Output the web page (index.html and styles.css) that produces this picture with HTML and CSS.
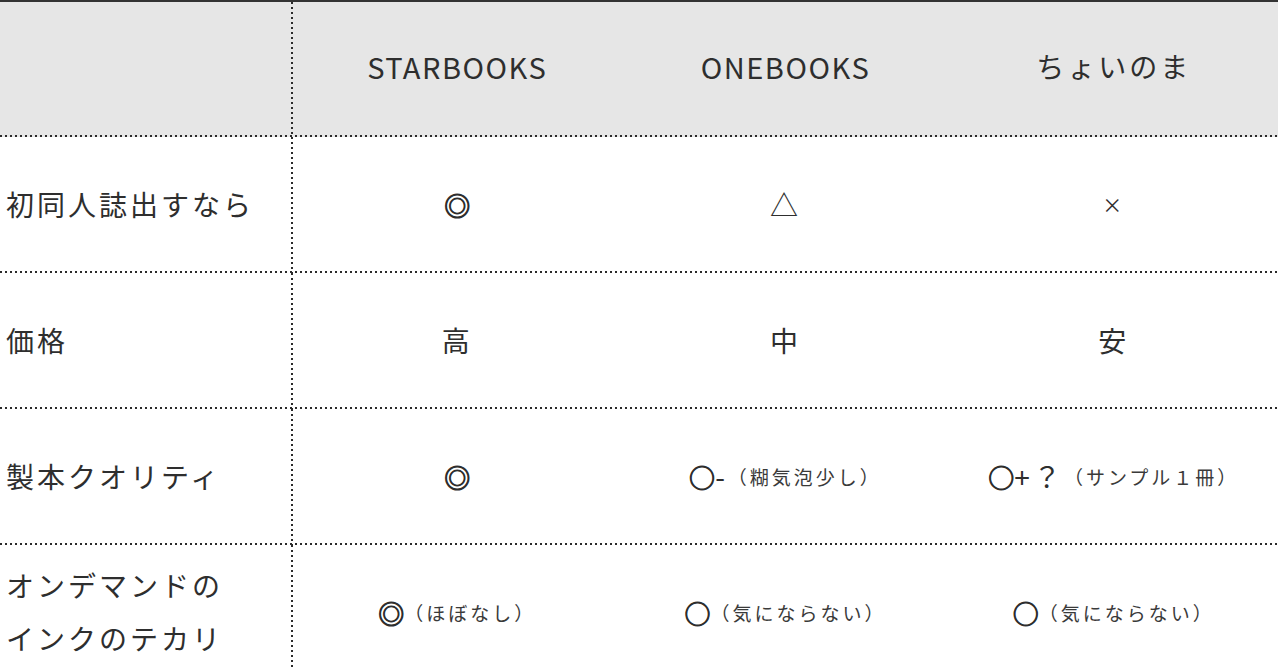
FILE: index.html
```html
<!DOCTYPE html>
<html lang="ja">
<head>
<meta charset="utf-8">
<title>比較表</title>
<link rel="stylesheet" href="styles.css">
</head>
<body>
<div class="table">
  <div class="row head">
    <div class="cell label"></div>
    <div class="cell latin">STARBOOKS</div>
    <div class="cell latin">ONEBOOKS</div>
    <div class="cell">ちょいのま</div>
  </div>
  <div class="row">
    <div class="cell label">初同人誌出すなら</div>
    <div class="cell"><span class="mark">◎</span></div>
    <div class="cell">△</div>
    <div class="cell"><span class="cross">×</span></div>
  </div>
  <div class="row">
    <div class="cell label">価格</div>
    <div class="cell">高</div>
    <div class="cell">中</div>
    <div class="cell">安</div>
  </div>
  <div class="row">
    <div class="cell label">製本クオリティ</div>
    <div class="cell"><span class="mark">◎</span></div>
    <div class="cell"><span class="mark">○</span>-<span class="note">（糊気泡少し）</span></div>
    <div class="cell"><span class="mark">○</span>+？<span class="note">（サンプル１冊）</span></div>
  </div>
  <div class="row">
    <div class="cell label two">オンデマンドの<br>インクのテカリ</div>
    <div class="cell"><span class="mark">◎</span><span class="note">（ほぼなし）</span></div>
    <div class="cell"><span class="mark">○</span><span class="note">（気にならない）</span></div>
    <div class="cell"><span class="mark">○</span><span class="note">（気にならない）</span></div>
  </div>
</div>
</body>
</html>
```

FILE: styles.css
```css
html, body {
  margin: 0;
  padding: 0;
  background: #ffffff;
}

body {
  font-family: "Noto Sans CJK JP", "Noto Sans", sans-serif;
  color: #2e2e2e;
  font-size: 28px;
  letter-spacing: 3px;
}

.table {
  width: 1278px;
  border-top: 2px solid #333333;
}

.row {
  display: grid;
  grid-template-columns: 293px repeat(3, 1fr);
  height: 136px;
  background-image: repeating-linear-gradient(to right, #2a2a2a 0 2px, transparent 2px 5px);
  background-size: 100% 2px;
  background-position: left bottom;
  background-repeat: no-repeat;
}

.row.head {
  height: 135px;
  background-color: #e6e6e6;
}

.cell {
  display: flex;
  align-items: center;
  justify-content: center;
  white-space: nowrap;
  padding-bottom: 2px;
}

.head .cell {
  padding-bottom: 7px;
}

.cell.latin {
  font-size: 29px;
  letter-spacing: 1.5px;
}

.cell.label {
  justify-content: flex-start;
  padding-left: 6px;
  background-image: repeating-linear-gradient(to bottom, #2a2a2a 0 2px, transparent 2px 5px);
  background-size: 2px 100%;
  background-position: right top;
  background-repeat: no-repeat;
}

.cell.two {
  line-height: 53px;
}

.note {
  font-size: 19px;
  letter-spacing: 3px;
  color: #3a3a3a;
}

.mark {
  font-size: 26px;
  letter-spacing: 0;
  -webkit-text-stroke: 1px #2e2e2e;
}

.cross {
  font-size: 20px;
}
```
